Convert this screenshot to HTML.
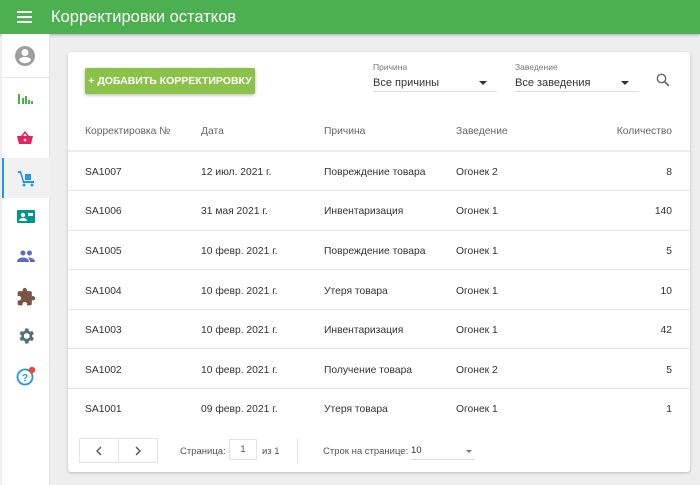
<!DOCTYPE html>
<html><head><meta charset="utf-8"><style>
*{box-sizing:border-box;margin:0;padding:0}
body{width:700px;height:485px;background:#eeeeee;font-family:"Liberation Sans",sans-serif;position:relative;overflow:hidden;color:#333}
.hdr{position:absolute;left:0;top:0;width:700px;height:34px;background:#4caf50;box-shadow:0 1px 3px rgba(0,0,0,.3)}
.hdr .t{position:absolute;left:51px;top:8px;color:#fff;font-size:16.5px}
.side{position:absolute;left:2px;top:34px;width:48px;height:451px;background:#fff;border-right:1px solid #e4e4e4}
.ic{position:absolute;left:0;width:48px;height:40px}
.ic svg{position:absolute;left:14px;top:10px}
.card{position:absolute;left:68px;top:52px;width:622px;height:420px;background:#fff;border-radius:3px;box-shadow:0 1px 3px rgba(0,0,0,.2)}
.btn{position:absolute;left:17px;top:16px;width:170px;height:26px;background:#8bc34a;color:#fff;font-size:10.5px;font-weight:bold;line-height:26px;text-align:center;border-radius:2px;box-shadow:0 1px 3px rgba(0,0,0,.3)}
.sel{position:absolute;border-bottom:1px solid #ddd;height:40px}
.sel .l{font-size:8.5px;color:#777;position:absolute;top:10px;left:0}
.sel .v{font-size:11px;color:#333;position:absolute;top:25px;left:0}
.sel .a{position:absolute;right:10px;top:29px;width:0;height:0;border-left:4px solid transparent;border-right:4px solid transparent;border-top:4px solid #333}
.th,.td{position:absolute;font-size:10.3px}
.th{color:#666;top:74px}
.td{color:#333;margin-top:2px}
.line{position:absolute;left:0;width:622px;height:1px;background:#e6e6e6}
.pg{position:absolute;top:386px;height:25px;border:1px solid #e3e3e3}
.sm{font-size:9.5px;color:#555;position:absolute}
</style></head><body>
<div class="hdr">
<svg style="position:absolute;left:17px;top:11px" width="15" height="12"><rect y="0" width="15" height="2" fill="#fff"/><rect y="5" width="15" height="2" fill="#fff"/><rect y="10" width="15" height="2" fill="#fff"/></svg>
<div class="t">Корректировки остатков</div></div>
<div class="side">
<div class="ic" style="top:2px;height:42px;border-bottom:1px solid #e6e6e6"><svg width="24" height="24" viewBox="0 0 24 24" style="left:11px;top:8px"><path fill="#9e9e9e" d="M12 2a10 10 0 1 0 0 20 10 10 0 0 0 0-20zm0 3a3.5 3.5 0 1 1 0 7 3.5 3.5 0 0 1 0-7zm0 14.2a7.2 7.2 0 0 1-6-3.2c0-2 4-3.1 6-3.1s6 1.1 6 3.1a7.2 7.2 0 0 1-6 3.2z"/></svg></div>
<div class="ic" style="top:46px"><svg width="18" height="18" viewBox="0 0 18 18"><path fill="#4caf50" d="M2 4h2v10H2zM6 8h2v6H6zM9 6h2v8H9zM12 10h2v4h-2zM15 11h2v3h-2z"/></svg></div>
<div class="ic" style="top:85px"><svg width="18" height="18" viewBox="0 0 18 18"><path fill="#e91e63" d="M1 7h16l-2 8H3zM5 7l4-5 4 5h-2L9 4.5 7 7z"/><circle cx="9" cy="11" r="1.3" fill="#fff"/></svg></div>
<div class="ic" style="top:124px;background:#f1f1f1;border-left:2px solid #2196f3"><svg width="20" height="20" viewBox="0 0 20 20" style="left:12px"><path fill="#2196f3" d="M2 3h3l3 10h10v2H7L4 5H2zM9 6h6v6H9z"/><circle cx="8" cy="17" r="1.5" fill="#2196f3"/><circle cx="16" cy="17" r="1.5" fill="#2196f3"/></svg></div>
<div class="ic" style="top:164px"><svg width="20" height="18" viewBox="0 0 20 18"><rect x="1" y="2" width="18" height="13" rx="1" fill="#009688"/><circle cx="7" cy="7" r="2.2" fill="#fff"/><path fill="#fff" d="M3 13c0-2 2-3 4-3s4 1 4 3z M12 5h5v3h-5z"/></svg></div>
<div class="ic" style="top:203px"><svg width="20" height="18" viewBox="0 0 20 18"><circle cx="7" cy="6" r="2.5" fill="#5c6bc0"/><circle cx="13.5" cy="6" r="2.5" fill="#5c6bc0"/><path fill="#5c6bc0" d="M1 15c0-3 3-4.5 6-4.5s6 1.5 6 4.5zM12 10.5c3 0 7 1 7 4.5h-5c0-2-1-3.5-2-4.5z"/></svg></div>
<div class="ic" style="top:243px"><svg width="20" height="20" viewBox="0 0 24 24"><path fill="#795548" d="M20.5 11H19V7a2 2 0 0 0-2-2h-4V3.5a2.5 2.5 0 0 0-5 0V5H4a2 2 0 0 0-2 2v3.8h1.5a2.7 2.7 0 0 1 0 5.4H2V20a2 2 0 0 0 2 2h3.8v-1.5a2.7 2.7 0 0 1 5.4 0V22H17a2 2 0 0 0 2-2v-4h1.5a2.5 2.5 0 0 0 0-5z"/></svg></div>
<div class="ic" style="top:282px"><svg width="20" height="20" viewBox="0 0 24 24"><path fill="#546e7a" d="M19.4 13a7.8 7.8 0 0 0 0-2l2.1-1.6-2-3.5-2.5 1a7 7 0 0 0-1.7-1L14.9 3h-4l-.4 2.9a7 7 0 0 0-1.7 1l-2.5-1-2 3.5L6.4 11a7.8 7.8 0 0 0 0 2l-2.1 1.6 2 3.5 2.5-1a7 7 0 0 0 1.7 1l.4 2.9h4l.4-2.9a7 7 0 0 0 1.7-1l2.5 1 2-3.5zM12.9 15.5a3.5 3.5 0 1 1 0-7 3.5 3.5 0 0 1 0 7z"/></svg></div>
<div class="ic" style="top:322px"><svg width="22" height="20" viewBox="0 0 22 20"><circle cx="9" cy="11" r="7.5" fill="none" stroke="#2196f3" stroke-width="1.8"/><text x="9" y="15" font-size="10" font-weight="bold" fill="#2196f3" text-anchor="middle" font-family="Liberation Sans">?</text><circle cx="16" cy="4" r="3.2" fill="#f44336"/></svg></div>
</div>
<div class="card">
<div class="btn">+ ДОБАВИТЬ КОРРЕКТИРОВКУ</div>
<div class="sel" style="left:305px;top:0;width:124px"><div class="l">Причина</div><div class="v">Все причины</div><div class="a"></div></div>
<div class="sel" style="left:447px;top:0;width:124px"><div class="l">Заведение</div><div class="v">Все заведения</div><div class="a"></div></div>
<svg style="position:absolute;left:588px;top:21px" width="14" height="14" viewBox="0 0 14 14"><circle cx="5.5" cy="5.5" r="4.2" fill="none" stroke="#666" stroke-width="1.4"/><path d="M8.5 8.5l4.5 4.5" stroke="#666" stroke-width="1.6"/></svg>
<div class="th" style="left:17px">Корректировка №</div>
<div class="th" style="left:133px">Дата</div>
<div class="th" style="left:256px">Причина</div>
<div class="th" style="left:388px">Заведение</div>
<div class="th" style="right:18px">Количество</div>
<div class="line" style="top:98px;height:2px;background:#ececec"></div>
<div class="td" style="left:17px;top:113px">SA1007</div><div class="td" style="left:133px;top:113px">12 июл. 2021 г.</div><div class="td" style="left:256px;top:113px">Повреждение товара</div><div class="td" style="left:388px;top:113px">Огонек 2</div><div class="td" style="right:18px;top:113px">8</div>
<div class="line" style="top:138px"></div>
<div class="td" style="left:17px;top:152px">SA1006</div><div class="td" style="left:133px;top:152px">31 мая 2021 г.</div><div class="td" style="left:256px;top:152px">Инвентаризация</div><div class="td" style="left:388px;top:152px">Огонек 1</div><div class="td" style="right:18px;top:152px">140</div>
<div class="line" style="top:178px"></div>
<div class="td" style="left:17px;top:192px">SA1005</div><div class="td" style="left:133px;top:192px">10 февр. 2021 г.</div><div class="td" style="left:256px;top:192px">Повреждение товара</div><div class="td" style="left:388px;top:192px">Огонек 1</div><div class="td" style="right:18px;top:192px">5</div>
<div class="line" style="top:217px"></div>
<div class="td" style="left:17px;top:232px">SA1004</div><div class="td" style="left:133px;top:232px">10 февр. 2021 г.</div><div class="td" style="left:256px;top:232px">Утеря товара</div><div class="td" style="left:388px;top:232px">Огонек 1</div><div class="td" style="right:18px;top:232px">10</div>
<div class="line" style="top:257px"></div>
<div class="td" style="left:17px;top:271px">SA1003</div><div class="td" style="left:133px;top:271px">10 февр. 2021 г.</div><div class="td" style="left:256px;top:271px">Инвентаризация</div><div class="td" style="left:388px;top:271px">Огонек 1</div><div class="td" style="right:18px;top:271px">42</div>
<div class="line" style="top:296px"></div>
<div class="td" style="left:17px;top:311px">SA1002</div><div class="td" style="left:133px;top:311px">10 февр. 2021 г.</div><div class="td" style="left:256px;top:311px">Получение товара</div><div class="td" style="left:388px;top:311px">Огонек 2</div><div class="td" style="right:18px;top:311px">5</div>
<div class="line" style="top:336px"></div>
<div class="td" style="left:17px;top:350px">SA1001</div><div class="td" style="left:133px;top:350px">09 февр. 2021 г.</div><div class="td" style="left:256px;top:350px">Утеря товара</div><div class="td" style="left:388px;top:350px">Огонек 1</div><div class="td" style="right:18px;top:350px">1</div>
<div class="pg" style="left:11px;width:40px"><svg style="position:absolute;left:15px;top:7px" width="8" height="10"><path d="M6 1L2 5l4 4" fill="none" stroke="#555" stroke-width="1.4"/></svg></div>
<div class="pg" style="left:50px;width:40px"><svg style="position:absolute;left:15px;top:7px" width="8" height="10"><path d="M2 1l4 4-4 4" fill="none" stroke="#555" stroke-width="1.4"/></svg></div>
<div class="sm" style="left:112px;top:394px">Страница:</div>
<div class="pg" style="left:161px;width:28px;top:387px;height:21px;font-size:9.5px;color:#555;text-align:center;line-height:19px">1</div>
<div class="sm" style="left:194px;top:394px">из 1</div>
<div style="position:absolute;left:229px;top:386px;width:1px;height:25px;background:#e3e3e3"></div>
<div class="sm" style="left:255px;top:394px">Строк на странице:</div>
<div style="position:absolute;left:343px;top:388px;width:64px;height:20px;border-bottom:1px solid #ddd;font-size:9.5px;color:#333;padding-top:5px">10<div style="position:absolute;right:3px;top:10px;border-left:3.5px solid transparent;border-right:3.5px solid transparent;border-top:3.5px solid #777"></div></div>
</div>
</body></html>
